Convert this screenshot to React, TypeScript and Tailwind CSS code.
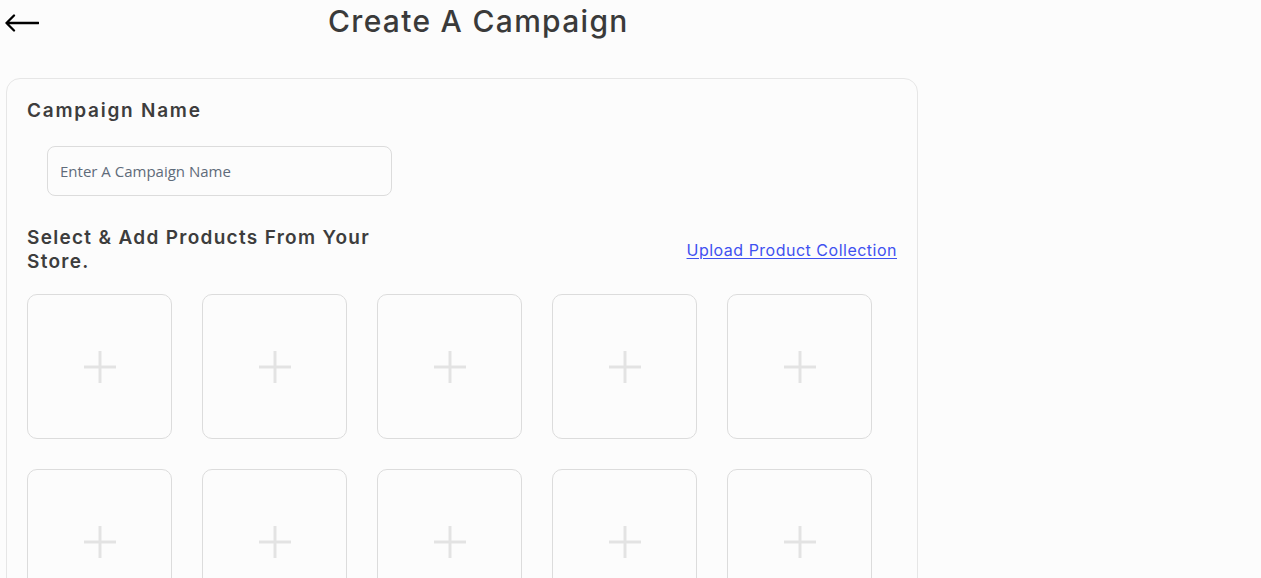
const slots = Array.from({ length: 10 }, (_, i) => i)

function PlusSlot() {
  return (
    <button
      type="button"
      className="flex h-[145px] w-[145px] items-center justify-center rounded-[10px] border border-[#dcdcdc] bg-[#fcfcfc]"
    >
      <svg width="32" height="32" viewBox="0 0 32 32" fill="none">
        <path d="M16 0v32M0 16h32" stroke="#e3e3e3" strokeWidth="3" />
      </svg>
    </button>
  )
}

export default function App() {
  return (
    <div className="min-h-screen bg-[#fcfcfc] font-['Inter',sans-serif] text-[#3d3d3d]">
      <header className="flex h-[43px] items-center">
        <button type="button" className="ml-[5px] mt-[2px] text-black">
          <svg width="34" height="20" viewBox="0 0 34 20" fill="none">
            <path
              d="M1.5 10h32M9 2.5 1.5 10 9 17.5"
              stroke="currentColor"
              strokeWidth="2.3"
              strokeLinecap="round"
              strokeLinejoin="round"
            />
          </svg>
        </button>
        <h1 className="ml-[289px] text-[30px] font-medium tracking-[1.3px] text-[#3a3a3a]">
          Create A Campaign
        </h1>
      </header>

      <main className="ml-[6px] mt-[35px] w-[912px] rounded-[14px] border border-[#e6e6e6] px-[20px] pb-10 pt-[20px]">
        <h2 className="text-[19px] font-semibold leading-6 tracking-[1.75px] text-[#3d3d3d]">
          Campaign Name
        </h2>

        <input
          type="text"
          placeholder="Enter A Campaign Name"
          className="ml-[20px] mt-[23px] h-[50px] w-[345px] rounded-[8px] border border-[#dcdcdc] bg-[#fcfcfc] px-[12px] font-['Open_Sans',sans-serif] text-[15px] placeholder:text-[#5f6b7a] focus:outline-none"
        />

        <div className="mt-[30px] flex items-center justify-between">
          <h2 className="w-[380px] text-[19px] font-semibold leading-6 tracking-[1.3px] text-[#3d3d3d]">
            Select &amp; Add Products From Your Store.
          </h2>
          <a
            href="#"
            className="text-[16px] tracking-[0.5px] text-[#3f51f0] underline underline-offset-2"
          >
            Upload Product Collection
          </a>
        </div>

        <div className="mt-[20px] grid grid-cols-[repeat(5,145px)] gap-[30px]">
          {slots.map((i) => (
            <PlusSlot key={i} />
          ))}
        </div>
      </main>
    </div>
  )
}
